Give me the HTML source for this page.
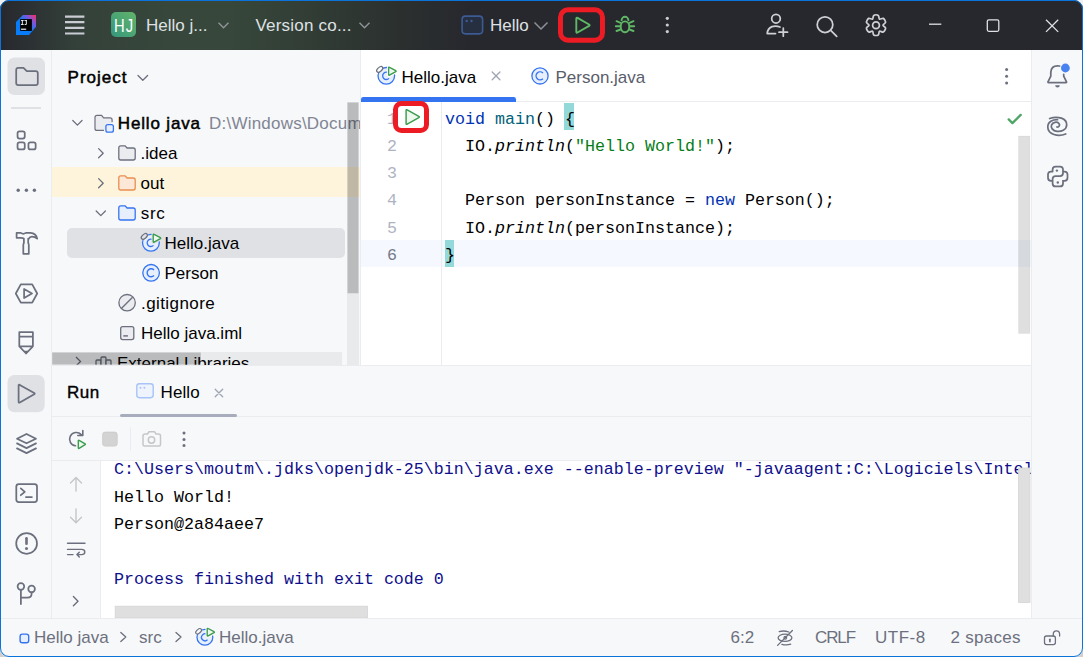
<!DOCTYPE html>
<html><head><meta charset="utf-8">
<style>
html,body{margin:0;padding:0;width:1083px;height:657px;overflow:hidden;background:linear-gradient(#f0f0f0,#e4e4e4 50%,#d0d0d0)}
*{box-sizing:border-box}
body{font-family:"Liberation Sans",sans-serif;font-size:17px;color:#000}
.a{position:absolute}
.t{position:absolute;white-space:nowrap;line-height:20px;height:20px}
.m{position:absolute;white-space:pre;font-family:"Liberation Mono",monospace;font-size:16.67px;line-height:20px;height:20px}
svg{position:absolute;overflow:visible}
#win{position:absolute;left:0;top:0;width:1083px;height:657px;border-radius:9px;overflow:hidden;background:#f7f8fa}
#frame{position:absolute;left:0;top:0;width:1083px;height:657px;border:1px solid #0a74dc;border-radius:9px;pointer-events:none}
#title{left:0;top:0;width:1083px;height:50px;background:linear-gradient(90deg,#27282e 0px,#34413a 80px,#37473b 170px,#37473b 230px,#323e36 300px,#2b302f 400px,#27282e 470px,#27282e 1083px)}
</style></head><body>
<div id="win">
  <!-- title bar -->
  <div id="title" class="a"></div>


  <!-- TITLE CONTENT -->
  <svg class="a" style="left:0;top:0" width="1083" height="657" viewBox="0 0 1083 657">
    <defs>
      <linearGradient id="ijg" x1="0" y1="1" x2="1" y2="0"><stop offset="0" stop-color="#087cfa"/><stop offset="0.5" stop-color="#0a7bf8"/><stop offset="0.75" stop-color="#7b56d8"/><stop offset="1" stop-color="#ff2d5f"/></linearGradient>
      <linearGradient id="hjg" x1="0" y1="1" x2="1" y2="0"><stop offset="0" stop-color="#35967d"/><stop offset="1" stop-color="#62b46a"/></linearGradient>
    </defs>
    <polygon points="16,21.9 22.9,15.1 36,15.1 36,26.7 29,34.9 16,34.9" fill="url(#ijg)"/>
    <rect x="20.1" y="19.1" width="11.8" height="11.8" fill="#000"/>
    <g fill="#f0f0f0"><rect x="20.9" y="20.1" width="2.8" height="0.95"/><rect x="21.85" y="20.1" width="0.95" height="4.8"/><rect x="20.9" y="23.95" width="2.8" height="0.95"/><rect x="24.5" y="20.1" width="2.3" height="0.95"/><rect x="25.85" y="20.1" width="0.95" height="4.3"/><rect x="24.6" y="23.95" width="1.8" height="0.95"/><rect x="20.9" y="28.6" width="5.3" height="1.2"/></g>
    <path d="M65 16.6h19.4M65 22.2h19.4M65 27.8h19.4M65 33.5h19.4" stroke="#c9ccd3" stroke-width="2.2"/>
    <rect x="111" y="12" width="25" height="25" rx="5" fill="url(#hjg)"/>
    <path d="M218.5 22.8l5 5 5-5M359.5 22.8l5 5 5-5M534.5 22.5l6.5 6.5 6.5-6.5" stroke="#8d9096" stroke-width="1.5" fill="none"/>
    <rect x="462.1" y="16.1" width="20.5" height="17.8" rx="3.3" fill="#262f40" stroke="#3d5a94" stroke-width="1.6"/>
    <circle cx="466.7" cy="21" r="1.2" fill="#3d5a94"/><circle cx="471.5" cy="21" r="1.2" fill="#3d5a94"/>
    <rect x="560.5" y="9.7" width="42" height="30.6" rx="7.5" fill="none" stroke="#ed1c24" stroke-width="5"/>
    <path d="M576.3 19.2v12.6q0 1.4 1.2.7l11.6-6.6q1.1-.7 0-1.4l-11.6-6.6q-1.2-.7-1.2.7z" fill="none" stroke="#5fb865" stroke-width="1.9" stroke-linejoin="round"/>
    <g fill="none" stroke="#5fb865" stroke-width="1.9" stroke-linecap="round">
      <path d="M621.6 20.2a3.4 3.4 0 0 1 6.8 0"/>
      <ellipse cx="625" cy="26.8" rx="4.3" ry="5.4"/>
      <path d="M616.5 21.2l4 1.6M633.5 21.2l-4 1.6M615.8 26.2h4.3M634.2 26.2h-4.3M616.5 31l4-1.5M633.5 31l-4-1.5"/>
    </g>
    <g fill="#c9ccd3"><circle cx="667.3" cy="18.3" r="1.6"/><circle cx="667.3" cy="25" r="1.6"/><circle cx="667.3" cy="31.6" r="1.6"/></g>
    <g fill="none" stroke="#ced0d6" stroke-width="1.75" stroke-linecap="round" stroke-linejoin="round">
      <circle cx="776" cy="18.7" r="4.3"/>
      <path d="M780 27Q776 25.3 772 26.6Q767.5 28.6 767.2 33.5H775.5"/>
      <path d="M783.3 28v8.2M779 32.2h8.5"/>
      <circle cx="825" cy="24.7" r="7.8"/>
      <path d="M830.7 30.4l6 6"/>
      <path d="M873.75 15.46C874.71 14.84 877.29 14.84 878.25 15.46C879.21 16.07 878.66 18.65 879.50 19.14C880.34 19.63 882.30 17.86 883.31 18.38C884.32 18.90 885.62 21.14 885.56 22.28C885.51 23.41 883.00 24.23 883.00 25.20C883.00 26.17 885.51 26.99 885.56 28.12C885.62 29.26 884.32 31.50 883.31 32.02C882.30 32.54 880.34 30.77 879.50 31.26C878.66 31.75 879.21 34.33 878.25 34.94C877.29 35.56 874.71 35.56 873.75 34.94C872.79 34.33 873.34 31.75 872.50 31.26C871.66 30.77 869.700 32.54 868.69 32.02C867.68 31.50 866.38 29.26 866.44 28.12C866.49 26.99 869.00 26.17 869.00 25.20C869.00 24.23 866.49 23.41 866.44 22.28C866.38 21.14 867.68 18.90 868.69 18.38C869.70 17.86 871.66 19.63 872.50 19.14C873.34 18.65 872.79 16.07 873.75 15.46z"/>
      <circle cx="876" cy="25.2" r="3.4"/>
    </g>
    <g fill="none" stroke="#dfe1e5" stroke-width="1.3">
      <path d="M929 24.2h12.3"/>
      <rect x="987.3" y="19.8" width="11.5" height="11.5" rx="1.5"/>
      <path d="M1046 19.7l12.2 12.2M1058.2 19.7l-12.2 12.2"/>
    </g>
  </svg>
  <div class="t" style="left:114px;top:15.5px;color:#fff;font-size:18.5px;letter-spacing:1.2px;transform:scaleX(0.8);transform-origin:0 0">HJ</div>
  <div class="t" style="left:146px;top:16px;color:#dfe1e5">Hello j...</div>
  <div class="t" style="left:255.5px;top:16px;color:#dfe1e5;letter-spacing:0.2px">Version co...</div>
  <div class="t" style="left:490px;top:16px;color:#dfe1e5">Hello</div>

  <!-- left strip -->
  <div class="a" style="left:0;top:50px;width:51px;height:568px;background:#f7f8fa"></div>
  <div class="a" style="left:51px;top:50px;width:1px;height:568px;background:#ebecf0"></div>

  <!-- project panel -->
  <div class="a" style="left:52px;top:50px;width:308px;height:315px;background:#f7f8fa"></div>
  <div class="a" style="left:360px;top:50px;width:1px;height:315px;background:#ebecf0"></div>


  <!-- LEFT STRIP ICONS -->
  <svg class="a" style="left:0;top:0" width="1083" height="657" viewBox="0 0 1083 657">
    <rect x="7.5" y="57.5" width="37.5" height="37.5" rx="7" fill="#dfe1e5"/>
    <rect x="7.5" y="375" width="37.2" height="37.2" rx="7" fill="#dfe1e5"/>
    <path d="M11 108h30" stroke="#dfe1e5" stroke-width="2"/>
    <g fill="none" stroke="#6c707e" stroke-width="1.75" stroke-linejoin="round" stroke-linecap="round">
      <path d="M16.2 83V70q0-2.1 2.1-2.1h5.2l3.3 3.3h8.9q2.1 0 2.1 2.1V83q0 2.1-2.1 2.1H18.3q-2.1 0-2.1-2.1z"/>
      <rect x="17.55" y="131.35" width="7.2" height="7.2" rx="2"/>
      <rect x="17.55" y="142.25" width="7.2" height="7.2" rx="2"/>
      <rect x="28.45" y="142.25" width="7.2" height="7.2" rx="2"/>
      <path d="M16.6 232.9h4.2q1.3.9 2.5.9t2.5-.9h4.6q5.7.3 6.8 5.8q-2.4-2-5.3-2q-2.2 0-3.2 2.3M16.6 232.9v4.9h4.4q2 0 2.9.9M23.9 238.6V243q-.6.9-.6 2v8.8h5.5V245q0-1.1-.6-2V238.6"/>
      <path d="M15.8 293.5l5-9.2h11.4l5 9.2-5 9.2H20.8z"/>
      <path d="M24.1 289v9l7.9-4.5z"/>
      <path d="M19.3 332.2h13.6v14.1l-6.8 7.2-6.8-7.2zM19.3 336.6h13.6M19.3 346.3h13.6"/>
      <path d="M18.6 385.2v16.6q0 1.3 1.2.7l14.4-8.2q1-.6 0-1.2l-14.4-8.2q-1.2-.6-1.2.7z"/>
      <path d="M17 438.7l9.5-4.7 9.5 4.7-9.5 4.6zM17 443.4l9.5 4.7 9.5-4.7M17 448.4l9.5 4.7 9.5-4.7"/>
      <rect x="16.3" y="484.1" width="20.7" height="18" rx="2.5"/>
      <path d="M20.8 488.4l4 3.4-4 3.4M25.9 497h6"/>
      <circle cx="26.6" cy="543.4" r="10.4"/>
      <circle cx="20.9" cy="586.5" r="3.3"/>
      <circle cx="31.6" cy="589" r="3.3"/>
      <path d="M20.9 590v14M20.9 597.7h6.7q4-.2 4-4.2v-1.2"/>
    </g>
    <path d="M26.5 538.2v5.6" stroke="#6c707e" stroke-width="2.6" stroke-linecap="round"/>
    <circle cx="26.5" cy="548.4" r="1.5" fill="#6c707e"/>
    <path d="M23.6 350.8h5.2l-2.6 2.8z" fill="#6c707e"/>
    <g fill="#6c707e"><circle cx="18.2" cy="190.2" r="1.7"/><circle cx="26.4" cy="190.2" r="1.7"/><circle cx="34.4" cy="190.2" r="1.7"/></g>
  </svg>

  <!-- PROJECT PANEL CONTENT -->
  <div class="a" style="left:52px;top:167.3px;width:308px;height:30px;background:#fef4dc"></div>
  <div class="a" style="left:67px;top:227.5px;width:278px;height:30px;border-radius:5px;background:#dfe1e5"></div>
  <div class="t" style="left:67.6px;top:68px;-webkit-text-stroke:0.5px #000;letter-spacing:1.0px">Project</div>
  <div class="t" style="left:117.8px;top:113.7px;-webkit-text-stroke:0.5px #000;letter-spacing:0.84px">Hello java</div>
  <div class="t" style="left:209px;top:113.7px;color:#818594;width:151px;overflow:hidden;letter-spacing:0.22px">D:\Windows\Documents\Hello java</div>
  <div class="t" style="left:140.5px;top:143.6px">.idea</div>
  <div class="t" style="left:140.5px;top:173.6px">out</div>
  <div class="t" style="left:140.8px;top:203.7px;letter-spacing:0.7px">src</div>
  <div class="t" style="left:164.5px;top:233.7px">Hello.java</div>
  <div class="t" style="left:164.5px;top:263.7px">Person</div>
  <div class="t" style="left:141px;top:293.7px;letter-spacing:0.42px">.gitignore</div>
  <div class="t" style="left:141px;top:323.7px">Hello java.iml</div>
  <div class="a" style="left:52px;top:345px;width:308px;height:20px;overflow:hidden">
    <div class="t" style="left:65px;top:8.7px">External Libraries</div>
    <svg style="left:0;top:0" width="308" height="20"><path d="M24 12l4.5 4.5L24 21" fill="none" stroke="#6c707e" stroke-width="1.3"/><g fill="#ebecf0" stroke="#6c707e" stroke-width="1.3"><rect x="44" y="15" width="5" height="10" rx="1"/><rect x="49" y="12" width="5" height="13" rx="1"/><rect x="54" y="15" width="5" height="10" rx="1"/></g></svg>
  </div>
  <svg class="a" style="left:0;top:0" width="1083" height="657" viewBox="0 0 1083 657">
    <g fill="none" stroke="#6c707e" stroke-width="1.3" stroke-linecap="round" stroke-linejoin="round">
      <path d="M138 75.5l4.8 4.8 4.8-4.8"/>
      <path d="M72.8 120.5l4.6 4.6 4.6-4.6"/>
      <path d="M98.6 148.6l4.6 4.6-4.6 4.6M98.6 178.6l4.6 4.6-4.6 4.6"/>
      <path d="M96.2 211l4.6 4.6 4.6-4.6"/>
    </g>
    <path d="M104 130.4H97q-2 0-2-2V117.4q0-2 2-2h4.6l2 2.5h6.5q2 0 2 2v2.4" fill="#ebecf0" stroke="#6c707e" stroke-width="1.2"/>
    <rect x="105.9" y="124.6" width="7.5" height="7.6" rx="2" fill="#e7effd" stroke="#3574f0" stroke-width="1.3"/>
    <path d="M118.8 158V147.8q0-2 2-2h4.3l2 2.2h6.1q2 0 2 2V158q0 2-2 2H120.8q-2 0-2-2z" fill="#ebecf0" stroke="#6c707e" stroke-width="1.3"/>
    <path d="M118.8 188V177.8q0-2 2-2h4.3l2 2.2h6.1q2 0 2 2V188q0 2-2 2H120.8q-2 0-2-2z" fill="#fde8d7" stroke="#e88e50" stroke-width="1.3"/>
    <path d="M118.8 218V207.8q0-2 2-2h4.3l2 2.2h6.1q2 0 2 2V218q0 2-2 2H120.8q-2 0-2-2z" fill="#e7effd" stroke="#3574f0" stroke-width="1.3"/>
    <circle cx="150.9" cy="242.8" r="8.4" fill="#e7effd" stroke="#3574f0" stroke-width="1.3"/>
    <path d="M153.5 240.2a3.7 3.7 0 1 0 0 5.2" fill="none" stroke="#3574f0" stroke-width="1.3"/>
    <ellipse cx="144.3" cy="236.4" rx="3.6" ry="2" transform="rotate(-40 144.3 236.4)" fill="#dfe1e5" stroke="#6c707e" stroke-width="1.2"/>
    <path d="M153.2 234.80v6.80q0 1 .9.5l6.28 -3.40q.8-.5 0-1l-6.28 -3.40q-.9-.5-.9.5z" fill="#eef8ef" stroke="#dfe1e5" stroke-width="3.4" stroke-linejoin="round"/><path d="M153.2 234.80v6.80q0 1 .9.5l6.28 -3.40q.8-.5 0-1l-6.28 -3.40q-.9-.5-.9.5z" fill="#eef8ef" stroke="#3a9c4c" stroke-width="1.35" stroke-linejoin="round"/>
    <circle cx="151.1" cy="272.8" r="8.3" fill="#e7effd" stroke="#3574f0" stroke-width="1.3"/>
    <path d="M154 270a4 4 0 1 0 0 5.6" fill="none" stroke="#3574f0" stroke-width="1.4"/>
    <circle cx="127.1" cy="302.7" r="8.2" fill="#ebecf0" stroke="#6c707e" stroke-width="1.3"/>
    <path d="M121.6 308.2l11-11" stroke="#6c707e" stroke-width="1.3"/>
    <rect x="120.7" y="326.6" width="13.1" height="13" rx="2" fill="#ebecf0" stroke="#6c707e" stroke-width="1.3"/>
    <path d="M123.3 335.9h4.6" stroke="#6c707e" stroke-width="1.5"/>
    <!-- scrollbars -->
    <rect x="347" y="102" width="12" height="263" fill="rgba(0,0,0,0.055)"/>
    <rect x="347.2" y="102.2" width="11.6" height="191.4" fill="rgba(0,0,0,0.2)" stroke="rgba(255,255,255,0.5)" stroke-width="0.6"/>
    <rect x="52" y="352" width="290" height="13" fill="rgba(0,0,0,0.055)"/>
    <rect x="52" y="352.2" width="149" height="12.6" fill="rgba(0,0,0,0.2)" stroke="rgba(255,255,255,0.5)" stroke-width="0.6"/>
  </svg>

  <!-- editor -->
  <div class="a" style="left:361px;top:50px;width:670px;height:315px;background:#fff"></div>
  <div class="a" style="left:361px;top:101px;width:670px;height:1px;background:#ebecf0"></div>


  <!-- EDITOR CONTENT -->
  <div class="a" style="left:361px;top:240px;width:670px;height:27px;background:#f5f8fe"></div>
  <div class="a" style="left:441px;top:102px;width:1px;height:263px;background:#ebecf0"></div>
  <div class="a" style="left:564px;top:102.8px;width:10px;height:27px;background:#93d9d9"></div>
  <div class="a" style="left:445px;top:240.2px;width:9px;height:26.5px;background:#93d9d9"></div>
  <div class="m" style="left:387px;top:109.5px;color:#aeb3c2">1</div>
  <div class="m" style="left:387px;top:136.8px;color:#aeb3c2">2</div>
  <div class="m" style="left:387px;top:164.1px;color:#aeb3c2">3</div>
  <div class="m" style="left:387px;top:191.4px;color:#aeb3c2">4</div>
  <div class="m" style="left:387px;top:218.7px;color:#aeb3c2">5</div>
  <div class="m" style="left:387px;top:246px;color:#767a8a">6</div>
  <div class="m" style="left:445px;top:109.5px"><span style="color:#0033b3">void</span> <span style="color:#00627a">main</span>() {</div>
  <div class="m" style="left:445px;top:136.8px">  IO.<i>println</i>(<span style="color:#067d17">"Hello World!"</span>);</div>
  <div class="m" style="left:445px;top:191.4px">  Person personInstance = <span style="color:#0033b3">new</span> Person();</div>
  <div class="m" style="left:445px;top:218.7px">  IO.<i>println</i>(personInstance);</div>
  <div class="m" style="left:445px;top:246px">}</div>
  <div class="t" style="left:401.5px;top:68px">Hello.java</div>
  <div class="t" style="left:555.5px;top:68px;color:#5a5d6a">Person.java</div>
  <svg class="a" style="left:0;top:0" width="1083" height="657" viewBox="0 0 1083 657">
    <path d="M361 102V99.3q0-2.3 2.3-2.3h150.4q2.3 0 2.3 2.3V102z" fill="#3574f0"/>
    <circle cx="386.3" cy="75.8" r="8.3" fill="#e7effd" stroke="#3574f0" stroke-width="1.3"/>
    <path d="M389 73.2a3.7 3.7 0 1 0 0 5.2" fill="none" stroke="#3574f0" stroke-width="1.3"/>
    <ellipse cx="379.7" cy="69.4" rx="3.6" ry="2" transform="rotate(-40 379.7 69.4)" fill="#fff" stroke="#6c707e" stroke-width="1.2"/>
    <path d="M388.6 67.80v6.80q0 1 .9.5l6.28 -3.40q.8-.5 0-1l-6.28 -3.40q-.9-.5-.9.5z" fill="#eef8ef" stroke="#ffffff" stroke-width="3.4" stroke-linejoin="round"/><path d="M388.6 67.80v6.80q0 1 .9.5l6.28 -3.40q.8-.5 0-1l-6.28 -3.40q-.9-.5-.9.5z" fill="#eef8ef" stroke="#3a9c4c" stroke-width="1.35" stroke-linejoin="round"/>
    <path d="M492.2 72l7.7 7.7M499.9 72l-7.7 7.7" stroke="#a0a5b4" stroke-width="1.3" stroke-linecap="round"/>
    <circle cx="540" cy="75.9" r="8.1" fill="#e7effd" stroke="#3574f0" stroke-width="1.3"/>
    <path d="M542.9 73a4 4 0 1 0 0 5.7" fill="none" stroke="#3574f0" stroke-width="1.4"/>
    <g fill="#6c707e"><circle cx="1006.6" cy="69.5" r="1.5"/><circle cx="1006.6" cy="76.2" r="1.5"/><circle cx="1006.6" cy="83" r="1.5"/></g>
    <path d="M1008.7 119.4l3.7 3.7 8.3-8.2" fill="none" stroke="#4fa565" stroke-width="2.3" stroke-linecap="round" stroke-linejoin="round"/>
    <rect x="1018.5" y="136" width="11.5" height="197.5" fill="rgba(0,0,0,0.125)" stroke="rgba(0,0,0,0.04)" stroke-width="0.8"/>
    <rect x="395.5" y="103.5" width="31" height="27" rx="6" fill="#fff" stroke="#ed1c24" stroke-width="5"/>
    <path d="M406.1 110.3v13.2q0 1.3 1.1.7l11.6-6.6q1-.6 0-1.2l-11.6-6.6q-1.1-.6-1.1.7z" fill="#eef8ef" stroke="#3a9c4c" stroke-width="1.45" stroke-linejoin="round"/>
  </svg>

  <!-- right strip -->
  <div class="a" style="left:1031px;top:50px;width:1px;height:568px;background:#ebecf0"></div>

  <!-- run panel -->
  <div class="a" style="left:52px;top:365px;width:979px;height:1px;background:#ebecf0"></div>
  <div class="a" style="left:52px;top:416px;width:979px;height:1px;background:#ebecf0"></div>
  <div class="a" style="left:52px;top:460px;width:979px;height:1px;background:#ebecf0"></div>
  <div class="a" style="left:101px;top:461px;width:930px;height:157px;background:#fff"></div>
  <div class="a" style="left:100px;top:461px;width:1px;height:157px;background:#ebecf0"></div>


  <!-- RIGHT STRIP ICONS -->
  <svg class="a" style="left:0;top:0" width="1083" height="657" viewBox="0 0 1083 657">
    <g fill="none" stroke="#6c707e" stroke-width="1.75" stroke-linecap="round" stroke-linejoin="round">
      <path d="M1059.6 66q-1-.2-2.1-.2q-6.4 0-6.7 6.6v3.8l-2.8 5.6q-.3.8.5.8h17.5q.8 0 .5-.8l-2.8-5.6v-1.9"/>
      <path d="M1049.6 118.5C1058 115.5 1067 118.5 1066.7 125C1066.5 130 1061 131.8 1057 131.3C1052.5 130.8 1050.5 127.5 1051.6 124.8C1052.8 122 1057 121.5 1058.8 123.3C1060.5 125 1059 127.2 1057 127"/>
      <path d="M1065.7 134C1058 137 1048 134.5 1047.8 127.3C1047.6 121.5 1053 119.6 1057.5 119.7"/>
      <path d="M1052.6 171.5V169.6q0-3 3-3h4.4q3 0 3 3v3.5q0 3-3 3h-4.4q-3 0-3 3v4.3q0 3 3 3h4.4q3 0 3-3v-1.6M1052.6 171.5h-1.6q-3 0-3 3v3.3q0 3 3 3h1.6M1062.8 180.8h1.7q3 0 3-3v-3.3q0-3-3-3h-1.7"/>
    </g>
    <circle cx="1065.4" cy="68" r="4.4" fill="#4682f0"/>
    <path d="M1055.2 85.3a2.3 2.3 0 0 0 4.6 0z" fill="#6c707e"/>
    <circle cx="1056.9" cy="170.6" r="1.2" fill="#6c707e"/><circle cx="1057.8" cy="182.5" r="1.2" fill="#6c707e"/>
  </svg>

  <!-- RUN PANEL -->
  <div class="t" style="left:67px;top:383px;-webkit-text-stroke:0.4px #000;letter-spacing:0.55px">Run</div>
  <div class="t" style="left:160.5px;top:383px;letter-spacing:0.1px">Hello</div>
  <div class="m" style="left:114px;top:460.3px;color:#0f0f8c;width:917px;overflow:hidden">C:\Users\moutm\.jdks\openjdk-25\bin\java.exe --enable-preview "-javaagent:C:\Logiciels\IntelliJ</div>
  <div class="m" style="left:114px;top:487.6px">Hello World!</div>
  <div class="m" style="left:114px;top:514.9px">Person@2a84aee7</div>
  <div class="m" style="left:114px;top:569.5px;color:#0f0f8c">Process finished with exit code 0</div>
  <svg class="a" style="left:0;top:0" width="1083" height="657" viewBox="0 0 1083 657">
    <rect x="136.8" y="383.8" width="16.4" height="13.9" rx="2.6" fill="#eef3fd" stroke="#a8c3f7" stroke-width="1.4"/>
    <circle cx="140.5" cy="387.7" r="1" fill="#a8c3f7"/><circle cx="144.4" cy="387.7" r="1" fill="#a8c3f7"/>
    <path d="M215.2 389.3l7.5 7.5M222.7 389.3l-7.5 7.5" stroke="#9fa4b2" stroke-width="1.3" stroke-linecap="round"/>
    <rect x="120" y="414" width="117" height="3" rx="1.5" fill="#a8adbd"/>
    <g fill="none" stroke="#6c707e" stroke-width="1.6" stroke-linecap="round" stroke-linejoin="round">
      <path d="M75.5 445.8A6.7 6.7 0 1 1 81.2 434.6M82.8 430.6V435.5H77.8"/>
    </g>
    <path d="M78.3 440.4v7.4q0 .9.8.5l6-3.6q.6-.4 0-.8l-6-3.6q-.8-.4-.8.5z" fill="#eef8ef" stroke="#3a9c4c" stroke-width="1.4" stroke-linejoin="round"/>
    <rect x="102.6" y="432.1" width="14.6" height="14" rx="2.5" fill="#d3d3d3" stroke="#c9c9c9" stroke-width="0.8"/>
    <path d="M130.5 427.5v23" stroke="#ebecf0" stroke-width="1"/>
    <g fill="none" stroke="#c6c6c6" stroke-width="1.5" stroke-linejoin="round">
      <path d="M143 436q0-2 2-2h2.5l1.5-2.3h5.5l1.5 2.3h2.5q2 0 2 2v8.5q0 1.5-1.5 1.5h-14.5q-1.5 0-1.5-1.5z"/>
      <circle cx="151.5" cy="440" r="3.2"/>
    </g>
    <g fill="#6c707e"><circle cx="184" cy="433" r="1.5"/><circle cx="184" cy="439.4" r="1.5"/><circle cx="184" cy="445.6" r="1.5"/></g>
    <rect x="1018.5" y="468" width="11.5" height="134.5" fill="#dfdfdf" stroke="#d4d4d6" stroke-width="0.8"/>
    <rect x="115.2" y="606.2" width="252.3" height="11.5" fill="#dfdfdf" stroke="#d4d4d6" stroke-width="0.8"/>
  </svg>


  <!-- STATUS BAR -->
  <div class="t" style="left:34px;top:628.1px;color:#6c707e">Hello java</div>
  <div class="t" style="left:139px;top:628.1px;color:#6c707e">src</div>
  <div class="t" style="left:219px;top:628.1px;color:#6c707e">Hello.java</div>
  <div class="t" style="left:730.5px;top:628.1px;color:#6c707e">6:2</div>
  <div class="t" style="left:815px;top:628.1px;color:#6c707e;letter-spacing:-1.1px">CRLF</div>
  <div class="t" style="left:875px;top:628.1px;color:#6c707e;letter-spacing:0.5px">UTF-8</div>
  <div class="t" style="left:950.5px;top:628.1px;color:#6c707e;letter-spacing:0.28px">2 spaces</div>
  <svg class="a" style="left:0;top:0" width="1083" height="657" viewBox="0 0 1083 657">
    <rect x="20.1" y="634.1" width="8.6" height="8.6" rx="2.2" fill="#e7effd" stroke="#3574f0" stroke-width="1.4"/>
    <g fill="none" stroke="#6c707e" stroke-width="1.3" stroke-linecap="round" stroke-linejoin="round">
      <path d="M120.8 632.5l5 4.5-5 4.5M176 632.5l5 4.5-5 4.5"/>
      <path d="M779.2 631.6Q784 630.2 788.8 632M781.9 644.3Q786.5 645.5 790.7 644.1M777.6 645.4L792.4 630.5"/>
      <ellipse cx="785" cy="637.8" rx="6.9" ry="3.6"/>
      <circle cx="785.3" cy="637.8" r="1.3"/>
      <rect x="1044.5" y="636" width="10.9" height="8.6" rx="2"/>
      <path d="M1053.3 636V634a3.15 3.15 0 0 1 6.3 0v2"/>
      <path d="M1049.9 639.3v2.3" stroke-width="1.7"/>
    </g>
    <circle cx="204.9" cy="637.3" r="7.9" fill="#e7effd" stroke="#3574f0" stroke-width="1.3"/>
    <path d="M207.5 634.8a3.5 3.5 0 1 0 0 5" fill="none" stroke="#3574f0" stroke-width="1.3"/>
    <ellipse cx="198.6" cy="631.3" rx="3.4" ry="1.9" transform="rotate(-40 198.6 631.3)" fill="#f7f8fa" stroke="#6c707e" stroke-width="1.1"/>
    <path d="M207.2 629.00v6.40q0 1 .9.5l5.93 -3.20q.8-.5 0-1l-5.93 -3.20q-.9-.5-.9.5z" fill="#eef8ef" stroke="#f7f8fa" stroke-width="3.4" stroke-linejoin="round"/><path d="M207.2 629.00v6.40q0 1 .9.5l5.93 -3.20q.8-.5 0-1l-5.93 -3.20q-.9-.5-.9.5z" fill="#eef8ef" stroke="#3a9c4c" stroke-width="1.35" stroke-linejoin="round"/>
    <g fill="none" stroke="#c6c6c8" stroke-width="1.4" stroke-linecap="round" stroke-linejoin="round">
      <path d="M76 477.8v13.2M70.5 483l5.5-5.5 5.5 5.5"/>
      <path d="M76 509v13.5M70.5 517.3l5.5 5.5 5.5-5.5"/>
    </g>
    <g fill="none" stroke="#6c707e" stroke-width="1.4" stroke-linecap="round" stroke-linejoin="round">
      <path d="M67.5 543.3h17.5M67.5 549.4h14q3.3 0 3.3 2.6t-3.3 2.6h-4.5M67.5 554.6h5.5M79.3 552.2l-2.4 2.4 2.4 2.4"/>
      <path d="M73.4 596.6l4.6 4.6-4.6 4.6"/>
    </g>
  </svg>

  <!-- status bar -->
  <div class="a" style="left:0;top:618px;width:1083px;height:1px;background:#ebecf0"></div>
</div>
<div id="frame"></div>
</body></html>
